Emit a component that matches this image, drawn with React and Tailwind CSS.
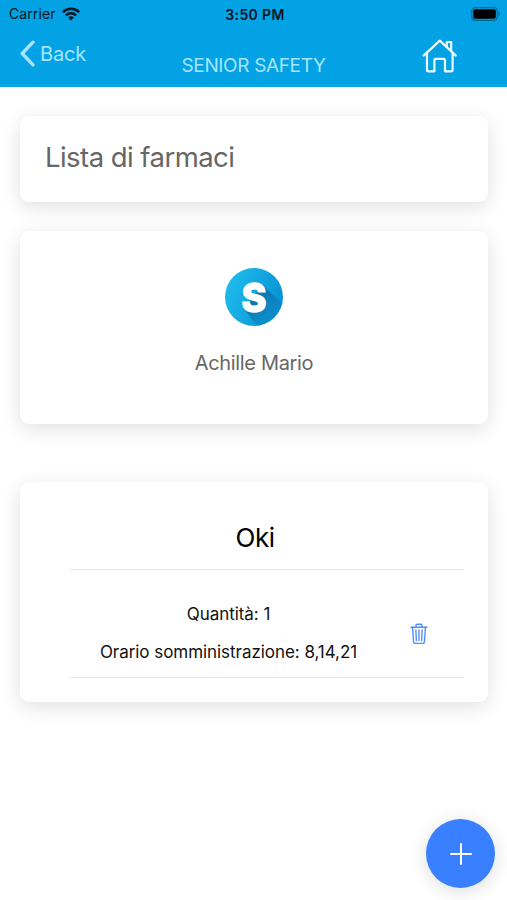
import React from 'react'

function WifiIcon() {
  return (
    <svg width="18" height="14" viewBox="0 0 18 14" fill="none" stroke="#06141c" strokeWidth="2.5">
      <path d="M0.9 5.1a11.5 11.5 0 0 1 16.2 0" />
      <path d="M3.9 8.3a7.2 7.2 0 0 1 10.2 0" />
      <path d="M9 13.6L6 10.6a4.3 4.3 0 0 1 6 0z" fill="#06141c" stroke="none" />
    </svg>
  )
}

function BatteryIcon() {
  return (
    <svg width="30" height="14" viewBox="0 0 30 14" fill="none">
      <rect x="0.7" y="0.7" width="25.6" height="12.6" rx="3.6" stroke="#04668f" strokeWidth="1.2" />
      <rect x="2.2" y="2.2" width="22.6" height="9.6" rx="2" fill="#000" />
      <path d="M27.4 4.8v4.4c0.9-0.3 1.5-1.2 1.5-2.2s-0.6-1.9-1.5-2.2z" fill="#04668f" />
    </svg>
  )
}

function HomeIcon() {
  return (
    <svg width="36" height="34" viewBox="0 0 36 34" fill="none" stroke="#eefaff" strokeWidth="2.2" strokeLinecap="round" strokeLinejoin="round">
      <path d="M1.6 16.6L17.8 1.6l16 15" />
      <path d="M5 13.6v17.2c0 0.9 0.6 1.5 1.5 1.5h5.9V21.4c0-0.9 0.6-1.5 1.5-1.5h7.6c0.9 0 1.5 0.6 1.5 1.5v10.9h6.1c0.9 0 1.5-0.6 1.5-1.5V13.6" />
      <path d="M24.8 7.9V3h4.4v9" />
    </svg>
  )
}

function TrashIcon() {
  return (
    <svg width="18" height="22" viewBox="0 0 18 22" fill="none" stroke="#4c8dff" strokeWidth="1.35" strokeLinecap="round" strokeLinejoin="round">
      <path d="M1 4.2h16" />
      <path d="M2.6 4.2l0.9 14.4c0.1 1.1 0.7 1.7 1.7 1.7h7.6c1 0 1.6-0.6 1.7-1.7l0.9-14.4" />
      <path d="M6 4.2V2.3c0-0.7 0.4-1.1 1.1-1.1h3.8c0.7 0 1.1 0.4 1.1 1.1v1.9" />
      <path d="M9 7v10.6M5.9 7l0.4 10.6M12.1 7l-0.4 10.6" />
    </svg>
  )
}

function Logo() {
  return (
    <svg width="60" height="60" viewBox="0 0 60 60">
      <defs>
        <linearGradient id="disc" x1="0" y1="0.3" x2="1" y2="0.7">
          <stop offset="0" stopColor="#1fbcec" />
          <stop offset="1" stopColor="#078fd3" />
        </linearGradient>
        <linearGradient id="shade" x1="0.2" y1="0.2" x2="0.85" y2="0.85">
          <stop offset="0" stopColor="#086a9f" stopOpacity="0.9" />
          <stop offset="1" stopColor="#086a9f" stopOpacity="0" />
        </linearGradient>
        <clipPath id="round">
          <circle cx="30" cy="30" r="29" />
        </clipPath>
      </defs>
      <circle cx="30" cy="30" r="29" fill="url(#disc)" />
      <path d="M39 18L62 41L48 60L34 60L20 42Z" fill="url(#shade)" clipPath="url(#round)" />
      <text
        x="30"
        y="44.7"
        textAnchor="middle"
        textLength="25"
        lengthAdjust="spacingAndGlyphs"
        fontFamily="Inter, sans-serif"
        fontWeight="800"
        fontSize="40"
        fill="#fff"
        stroke="#fff"
        strokeWidth="1.4"
      >
        S
      </text>
    </svg>
  )
}

function Card({ className = '', children }) {
  return (
    <section className={`rounded-[9px] bg-white shadow-[0_5px_20px_rgba(0,0,0,0.12)] ${className}`}>
      {children}
    </section>
  )
}

function StatusBar() {
  return (
    <div className="grid h-7 grid-cols-[1fr_auto_1fr] items-center pl-[9px] pr-[6px] text-[#06141c]">
      <div className="flex items-center gap-[6px]">
        <span className="text-[14px] leading-none tracking-[0.1px]">Carrier</span>
        <WifiIcon />
      </div>
      <span className="pt-px text-[14px] font-semibold leading-none tracking-[0.35px]">3:50 PM</span>
      <div className="flex justify-end">
        <BatteryIcon />
      </div>
    </div>
  )
}

function Header() {
  return (
    <header className="h-[87px] bg-[#03a2e4]">
      <StatusBar />
      <div className="grid h-[59px] grid-cols-[1fr_auto_1fr] items-start">
        <button className="flex items-center gap-[5px] pl-5 pt-3 text-[#a5e5ff]">
          <svg width="15" height="27" viewBox="0 0 15 27" fill="none" stroke="currentColor" strokeWidth="3.4" strokeLinecap="round" strokeLinejoin="round">
            <path d="M13 2.2L2.2 13.5L13 24.8" />
          </svg>
          <span className="text-[20px] leading-none tracking-[-0.2px]">Back</span>
        </button>
        <h1 className="pt-7 text-[19px] leading-5 tracking-[-0.35px] text-[#a5e5ff]">SENIOR SAFETY</h1>
        <div className="flex justify-end pr-[49px] pt-[11px]">
          <HomeIcon />
        </div>
      </div>
    </header>
  )
}

export default function App() {
  return (
    <div className="relative h-[900px] w-[507px] overflow-hidden bg-white font-['Inter',sans-serif]">
      <Header />

      <main className="flex flex-col px-5 pr-[19px] pt-[29px]">
        <Card className="flex h-[86px] items-center px-[25px] pb-[3px]">
          <h2 className="text-[27.5px] leading-none tracking-[-0.55px] text-[#666]">Lista di farmaci</h2>
        </Card>

        <Card className="mt-[29px] flex h-[193px] flex-col items-center pt-9">
          <Logo />
          <p className="mt-[26px] text-[20px] leading-5 tracking-[-0.35px] text-[#666]">Achille Mario</p>
        </Card>

        <Card className="mt-[58px] h-[220px] pl-[49px] pr-6 pt-[37px]">
          <h3 className="-ml-[23px] h-[50px] text-center text-[26px] leading-[38px] tracking-[-0.5px] text-black">Oki</h3>
          <div className="flex h-[109px] items-center border-y border-[#ebebeb]">
            <div className="w-[319px] pt-[19px] text-center text-[17px] leading-[38px] tracking-[-0.05px] text-[#111]">
              <p>Quantità: 1</p>
              <p>Orario somministrazione: 8,14,21</p>
            </div>
            <button className="ml-[22px] pt-[20px]">
              <TrashIcon />
            </button>
          </div>
        </Card>
      </main>

      <button className="absolute bottom-3 right-[12px] flex h-[69px] w-[69px] items-center justify-center rounded-full bg-[#3880ff] shadow-[0_3px_18px_rgba(0,0,0,0.14)]">
        <svg width="22" height="22" viewBox="0 0 22 22" fill="none" stroke="#fff" strokeWidth="2" strokeLinecap="round">
          <path d="M11 1v20M1 11h20" />
        </svg>
      </button>
    </div>
  )
}
